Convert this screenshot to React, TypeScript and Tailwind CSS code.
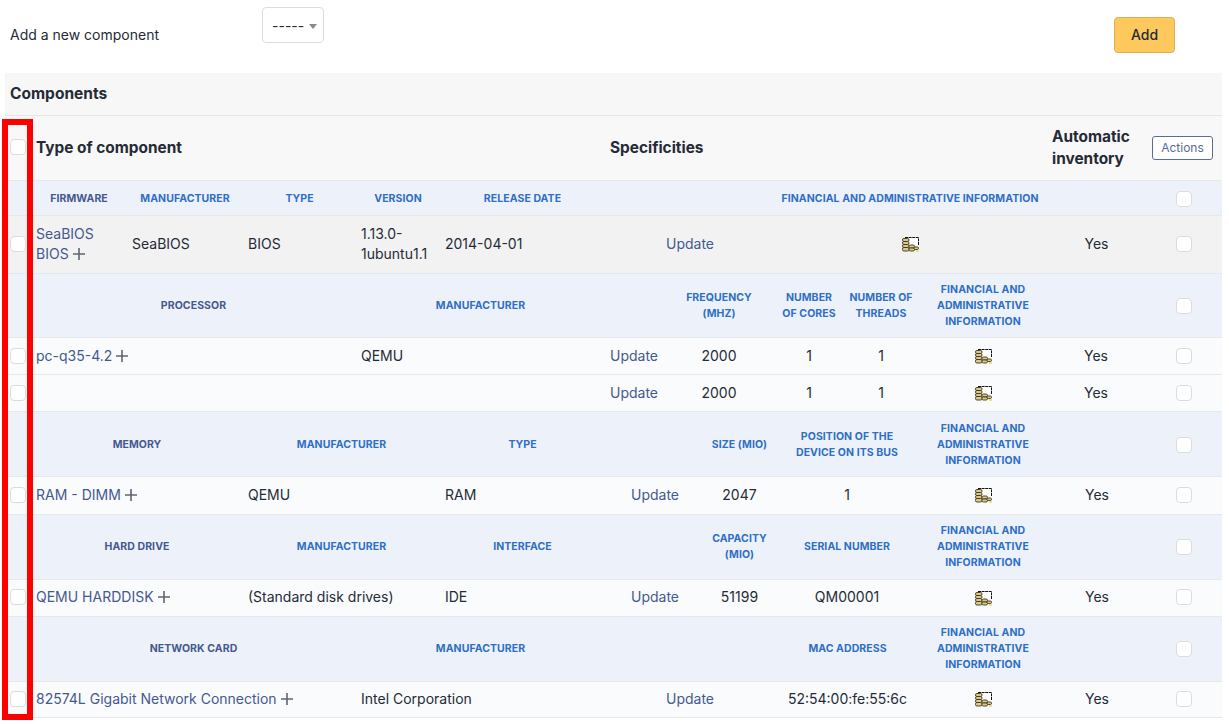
import React from "react";

const FIRMWARE = "grid-cols-[26px_96px_116px_113px_84px_165px_170px_270px_103px_72px]";
const PROCESSOR = "grid-cols-[26px_325px_249px_59px_110px_70px_74px_130px_100px_72px]";
const MEMORY = "grid-cols-[26px_212px_197px_165px_100px_69px_146px_126px_102px_72px]";
const NETWORK = "grid-cols-[26px_325px_249px_170px_145px_126px_102px_72px]";

function Check() {
  return <span className="block h-4 w-4 rounded-[4px] border border-[#dadcdf] bg-white" />;
}

function Plus() {
  return (
    <svg className="ml-[4px] inline-block align-[-1px]" width="12" height="12" viewBox="0 0 12 12">
      <path d="M6 0v12M0 6h12" stroke="#5f6672" strokeWidth="1.6" />
    </svg>
  );
}

function Coins({ flat }: { flat?: boolean }) {
  return (
    <svg width="17" height="15" viewBox="0 0 17 15" className={`mx-auto block ${flat ? "" : "mt-[2px]"}`}>
      <path d="M3 0.5h13.5v8" fill="none" stroke="#111111" strokeWidth="1" strokeDasharray="3 0.6" />
      <rect x="6" y="1" width="10" height="7" fill="#ffffff" />
      <g fill="#dcc987" stroke="#3a3520" strokeWidth="0.9">
        <rect x="0.5" y="1.5" width="6.5" height="3" rx="1.4" />
        <rect x="0.5" y="4.5" width="6.5" height="3" rx="1.4" />
        <rect x="0.5" y="7.5" width="6.5" height="3" rx="1.4" />
        <rect x="0.5" y="10.5" width="6.5" height="3.5" rx="1.4" />
        <rect x="7" y="8" width="5.5" height="3" rx="1.4" />
        <rect x="7" y="11" width="5.5" height="3" rx="1.4" />
        <rect x="12" y="10" width="4.5" height="2.5" rx="1.2" />
      </g>
      <rect x="14" y="13" width="3" height="2" fill="#efe089" />
    </svg>
  );
}

function Th({ children, dark, nowrap }: { children?: React.ReactNode; dark?: boolean; nowrap?: boolean }) {
  return (
    <div
      className={`px-[5px] text-center text-[10.5px] font-bold uppercase leading-4 tracking-[0.07px] ${nowrap ? "whitespace-nowrap" : ""} ${
        dark ? "text-[#45598f]" : "text-[#2f6fc7]"
      }`}
    >
      {children}
    </div>
  );
}

function Td({ children, align = "left", link, shift }: { children?: React.ReactNode; align?: string; link?: boolean; shift?: boolean }) {
  return (
    <div
      className={`px-[5px] leading-5 ${align === "center" ? "text-center" : "text-left"} ${
        link ? "text-[#45598f]" : ""
      } ${shift ? "pr-[9px]" : ""}`}
    >
      {children}
    </div>
  );
}

function Box() {
  return (
    <div className="pl-[5px]">
      <Check />
    </div>
  );
}

function EndCheck() {
  return (
    <div className="flex justify-center pr-[1px]">
      <Check />
    </div>
  );
}

function Fin({ nowrap }: { nowrap?: boolean }) {
  return <Th nowrap={nowrap}>Financial and administrative information</Th>;
}

function HeadRow({ cols, h, children }: { cols: string; h: string; children: React.ReactNode }) {
  return (
    <div className={`grid items-center border-b border-[#e6e8ec] bg-[#edf2fa] pr-[2px] ${cols} ${h}`}>
      <div />
      {children}
      <EndCheck />
    </div>
  );
}

function DataRow({
  cols,
  h,
  bg,
  shift,
  children,
}: {
  cols: string;
  h: string;
  bg?: string;
  shift?: boolean;
  children: React.ReactNode;
}) {
  return (
    <div className={`grid items-center border-b border-[#e6e8ec] pr-[2px] ${cols} ${h} ${bg ?? "bg-[#fafbfd]"}`}>
      <Box />
      {children}
      <Td align="center" shift={shift}>Yes</Td>
      <EndCheck />
    </div>
  );
}

export default function App() {
  return (
    <div className="h-[724px] w-[1229px] overflow-hidden bg-white text-[14px] text-[#252b36] [font-family:Inter,'Liberation_Sans',sans-serif]">
      <div className="flex h-[73px] items-start">
        <div className="w-[262px] pl-[10px] pt-[25px] leading-5">Add a new component</div>
        <div className="mt-[7px] flex h-9 w-[62px] items-center rounded-[4px] border border-[#dadcdf] pl-[9px] text-[14px]">
          -----
          <span className="ml-[5px] mt-[2px] h-0 w-0 border-x-[4px] border-t-[5px] border-x-transparent border-t-[#8a8a8a]" />
        </div>
        <button className="ml-[790px] mt-[17px] h-9 w-[61px] rounded-[4px] border border-[#e0ae50] bg-[#fec95c] pb-[2px] text-[14px] font-medium text-[#252b36]">
          Add
        </button>
      </div>

      <div className="mx-[5px] w-[1217px]">
        <div className="flex h-[43px] items-center border-b border-[#e6e6e6] bg-[#f7f7f7] pl-[5px] text-[15.5px] font-bold">
          Components
        </div>
        <div className="grid h-[65px] grid-cols-[26px_574px_441px_101px_75px] items-center border-b border-[#e6e8ec] bg-[#f8f8f8] pb-[2px] text-[15.4px] font-bold">
          <Box />
          <div className="px-[5px] pt-[2px]">Type of component</div>
          <div className="px-[5px] pt-[2px]">Specificities</div>
          <div className="pl-[6px] pt-[2px] leading-[22px]">Automatic inventory</div>
          <div className="pl-[5px] pt-[2px]">
            <span className="flex h-6 w-[61px] items-center justify-center rounded-[3px] border border-[#5a6b98] bg-white text-[12px] font-normal text-[#5a6b98]">
              Actions
            </span>
          </div>
        </div>

        <HeadRow cols={`${FIRMWARE} pt-[2px]`} h="h-[35px]">
          <Th dark>Firmware</Th>
          <Th>Manufacturer</Th>
          <Th>Type</Th>
          <Th>Version</Th>
          <Th>Release date</Th>
          <Th />
          <Fin nowrap />
          <Th />
        </HeadRow>
        <DataRow cols={`${FIRMWARE} pb-[2px]`} h="h-[58px]" bg="bg-[#f2f2f2]">
          <Td link>
            SeaBIOS BIOS
            <Plus />
          </Td>
          <Td>SeaBIOS</Td>
          <Td>BIOS</Td>
          <Td>1.13.0-1ubuntu1.1</Td>
          <Td>2014-04-01</Td>
          <Td align="center" link>Update</Td>
          <Coins />
        </DataRow>

        <HeadRow cols={PROCESSOR} h="h-[64px]">
          <Th dark>Processor</Th>
          <Th>Manufacturer</Th>
          <Th />
          <Th>Frequency (MHz)</Th>
          <Th>Number of cores</Th>
          <Th>Number of threads</Th>
          <Fin />
          <Th />
        </HeadRow>
        <DataRow cols={PROCESSOR} h="h-[37px]" shift>
          <Td link>
            pc-q35-4.2
            <Plus />
          </Td>
          <Td>QEMU</Td>
          <Td link>Update</Td>
          <Td align="center">2000</Td>
          <Td align="center">1</Td>
          <Td align="center">1</Td>
          <Coins flat />
        </DataRow>
        <DataRow cols={PROCESSOR} h="h-[37px]" shift>
          <Td />
          <Td />
          <Td link>Update</Td>
          <Td align="center">2000</Td>
          <Td align="center">1</Td>
          <Td align="center">1</Td>
          <Coins flat />
        </DataRow>

        <HeadRow cols={`${MEMORY} pt-[2px]`} h="h-[65px]">
          <Th dark>Memory</Th>
          <Th>Manufacturer</Th>
          <Th>Type</Th>
          <Th />
          <Th>Size (Mio)</Th>
          <Th>
            Position of the
            <br />
            device on its bus
          </Th>
          <Fin />
          <Th />
        </HeadRow>
        <DataRow cols={`${MEMORY} pb-[2px]`} h="h-[38px]">
          <Td link>
            RAM - DIMM
            <Plus />
          </Td>
          <Td>QEMU</Td>
          <Td>RAM</Td>
          <Td align="center" link>Update</Td>
          <Td align="center">2047</Td>
          <Td align="center">1</Td>
          <Coins />
        </DataRow>

        <HeadRow cols={MEMORY} h="h-[65px]">
          <Th dark>Hard drive</Th>
          <Th>Manufacturer</Th>
          <Th>Interface</Th>
          <Th />
          <Th>Capacity (Mio)</Th>
          <Th>Serial number</Th>
          <Fin />
          <Th />
        </HeadRow>
        <DataRow cols={`${MEMORY} pb-[2px]`} h="h-[37px]">
          <Td link>
            QEMU HARDDISK
            <Plus />
          </Td>
          <Td>(Standard disk drives)</Td>
          <Td>IDE</Td>
          <Td align="center" link>Update</Td>
          <Td align="center">51199</Td>
          <Td align="center">QM00001</Td>
          <Coins />
        </DataRow>

        <HeadRow cols={NETWORK} h="h-[65px]">
          <Th dark>Network card</Th>
          <Th>Manufacturer</Th>
          <Th />
          <Th>MAC address</Th>
          <Fin />
          <Th />
        </HeadRow>
        <DataRow cols={`${NETWORK} pb-[2px]`} h="h-[36px]">
          <Td link>
            <span className="whitespace-nowrap">
              82574L Gigabit Network Connection
              <Plus />
            </span>
          </Td>
          <Td>Intel Corporation</Td>
          <Td align="center" link>Update</Td>
          <Td align="center">52:54:00:fe:55:6c</Td>
          <Coins />
        </DataRow>
      </div>

      {/* annotation drawn over the screenshot */}
      <div className="pointer-events-none absolute left-[2px] top-[119px] h-[601px] w-[31px] border-[6px] border-[#ff0000]" />
    </div>
  );
}
